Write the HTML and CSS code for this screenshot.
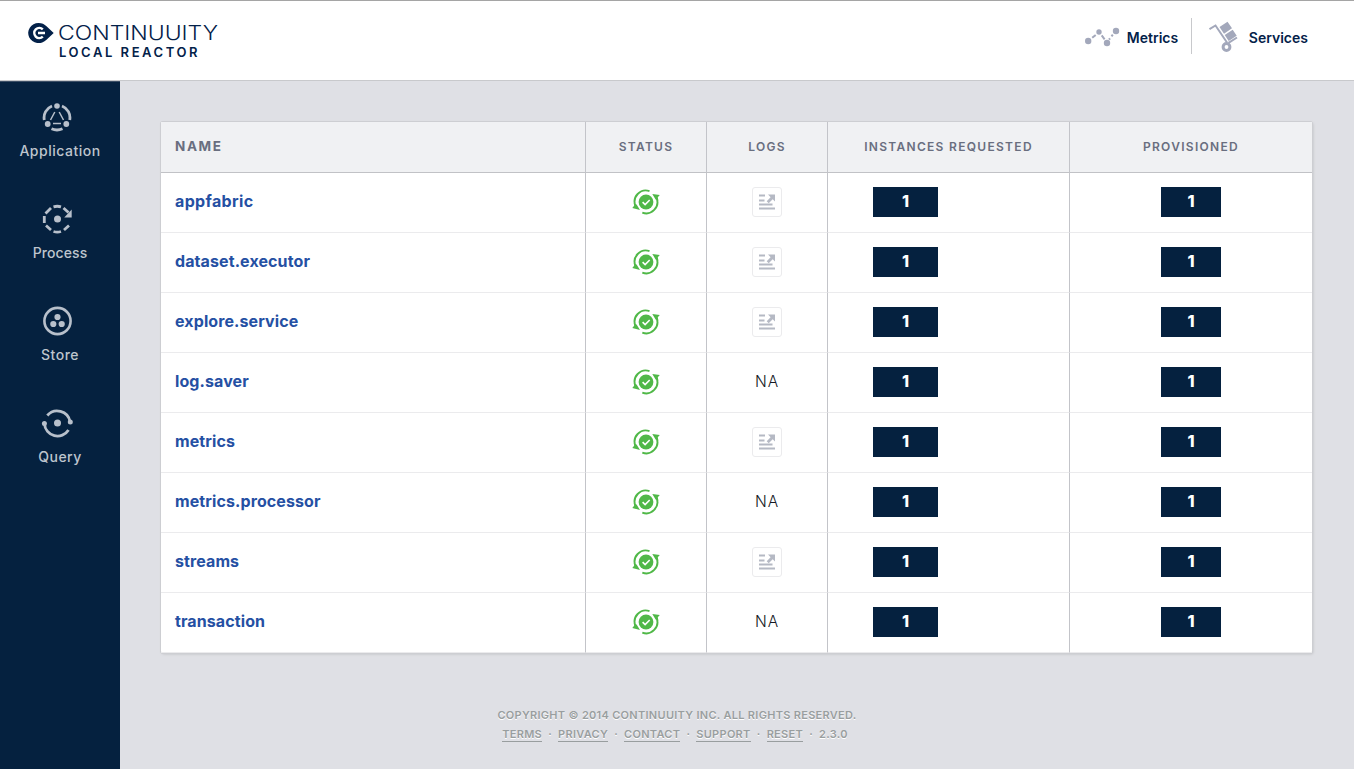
FILE: index.html
```html
<!DOCTYPE html>
<html lang="en">
<head>
<meta charset="utf-8">
<title>Continuuity Local Reactor</title>
<link rel="stylesheet" href="styles.css">
</head>
<body>
<svg class="defs" width="0" height="0">
  <symbol id="status" viewBox="0 0 28 26">
    <circle cx="14" cy="13" r="7.4" fill="#50b848"/>
    <path d="M10.600 13.200l2.500 2.400 4.600-4.600" fill="none" stroke="#fff" stroke-width="1.600"/>
    <path d="M17.500 2.100A11.200 11.200 0 0 0 3.500 17M10.300 23.600A11.200 11.200 0 0 0 24.600 9" fill="none" stroke="#50b848" stroke-width="1.900"/>
    <path d="M20.300 4.900l7.500 1.100-2 2.200.6 3.300-2.800-1zM.3 18.900l2-2.300L1.800 14.500l2.800.9 3.400 5.700z" fill="#50b848"/>
  </symbol>
  <symbol id="log" viewBox="0 0 16 16">
    <path d="M0 1.500h6M0 6.500h5.500M0 10.500h13.500M0 14.500h16" fill="none" stroke="#b5b9c4" stroke-width="2"/>
    <path d="M9 .5h7v7l-2.300-2.300-4 4-2-2 3.900-4z" fill="#b5b9c4"/>
  </symbol>
</svg>
<header class="header">
  <div class="brand">
    <svg class="mark" width="26" height="20" viewBox="0 0 26 20"><path d="M10.5 0C13.8 0 16.5 1.2 18.5 3.3L25.7 10l-7.2 6.7A10.5 10 0 1 1 10.5 0z" fill="#032149"/><path d="M14.800 6.400A5 5 0 1 0 14.800 13.600M10 10h7" fill="none" stroke="#fff" stroke-width="2.500"/></svg>
    <div class="brand-text">
      <svg class="wordmark" width="166" height="22" viewBox="0 0 166 22"><text x="0" y="17" textLength="160" lengthAdjust="spacingAndGlyphs">CONTINUUITY</text></svg>
      <div class="edition">LOCAL REACTOR</div>
    </div>
  </div>
  <nav class="top-nav">
    <a class="top-link metrics"><svg width="36" height="20" viewBox="0 0 36 20"><path d="M7.200 10.800l3.500-2.900M16.700 8.300l2.900 4M24 12.700l1-1.400M26.500 9.300l1.300-1.700" fill="none" stroke="#a3a8bb" stroke-width="2"/><g fill="#a3a8bb"><circle cx="3.2" cy="14" r="3.2"/><circle cx="14" cy="5" r="2.7"/><circle cx="22" cy="16" r="3.2"/><circle cx="31" cy="4" r="3.2"/></g></svg><span>Metrics</span></a>
    <a class="top-link services"><svg width="30" height="32" viewBox="0 0 30 32"><g fill="#a3a8bb"><path d="M10.500 6l8-5.300 4.500 6.500-8 5.500zM15.700 14l8-5.300 4 6-8 5.300z"/></g><path d="M.5 8.200l6-3.700L18 21.500M19.500 21.800l8.500-5.300" fill="none" stroke="#a3a8bb" stroke-width="2"/><circle cx="17.500" cy="26" r="3.400" fill="#fff" stroke="#a3a8bb" stroke-width="3"/></svg><span>Services</span></a>
  </nav>
</header>
<div class="body">
  <aside class="sidebar">
    <a class="side-link"><svg width="32" height="30" viewBox="0 0 32 30"><g fill="none" stroke="#b8c0cb" stroke-width="2.8"><path d="M3.300 18A13 12.600 0 0 1 11 4M21 4A13 12.600 0 0 1 28.700 18M10.500 26.800A14 14 0 0 0 21.500 26.800"/><path d="M13.800 10L9.500 18M18.200 10l4.300 8M12 21.500h8" stroke-width="1.500"/></g><g fill="#b8c0cb"><circle cx="16" cy="4" r="2.800"/><circle cx="6.700" cy="22" r="2.900"/><circle cx="25.300" cy="22" r="2.900"/></g></svg><span>Application</span></a>
    <a class="side-link"><svg width="32" height="30" viewBox="0 0 32 30"><path d="M12.500 2.800A13 13 0 0 1 20 2.800M22.500 4l5 4.500M4.500 9.500L10 4M3.300 12v7M5 21.500L10 26M12.500 27.500A13 13 0 0 0 20 27.500M23 26l5-4.500" fill="none" stroke="#b8c0cb" stroke-width="2.800"/><path d="M30.700 5.500v8h-7.500z" fill="#b8c0cb"/><circle cx="16.500" cy="15" r="3.500" fill="#b8c0cb"/></svg><span class="tight">Process</span></a>
    <a class="side-link"><svg width="32" height="30" viewBox="0 0 32 30"><circle cx="16.500" cy="15" r="13.100" fill="none" stroke="#b8c0cb" stroke-width="2.600"/><g fill="#b8c0cb"><circle cx="16.500" cy="11" r="3.100"/><circle cx="12.300" cy="18" r="3.100"/><circle cx="20.700" cy="18" r="3.100"/></g></svg><span>Store</span></a>
    <a class="side-link"><svg width="32" height="30" viewBox="0 0 32 30"><path d="M6.300 7.500A13 13 0 0 1 29 13.500M3.500 16A13 13 0 0 0 27.500 22" fill="none" stroke="#b8c0cb" stroke-width="2.800"/><g fill="#b8c0cb"><circle cx="16.500" cy="15" r="3.500"/><circle cx="29.300" cy="14" r="2.500"/><circle cx="3.400" cy="15.500" r="2.500"/></g></svg><span>Query</span></a>
  </aside>
  <main class="main">
    <div class="table">
      <div class="row head"><div class="cell h-name">NAME</div><div class="cell">STATUS</div><div class="cell">LOGS</div><div class="cell">INSTANCES REQUESTED</div><div class="cell">PROVISIONED</div></div>
      <div class="row"><div class="cell name wider">appfabric</div><div class="cell"><svg class="status"><use href="#status"/></svg></div><div class="cell"><a class="log"><svg width="16" height="16"><use href="#log"/></svg></a></div><div class="cell req"><b class="pill wide">1</b></div><div class="cell"><b class="pill">1</b></div></div>
      <div class="row"><div class="cell name">dataset.executor</div><div class="cell"><svg class="status"><use href="#status"/></svg></div><div class="cell"><a class="log"><svg width="16" height="16"><use href="#log"/></svg></a></div><div class="cell req"><b class="pill wide">1</b></div><div class="cell"><b class="pill">1</b></div></div>
      <div class="row"><div class="cell name">explore.service</div><div class="cell"><svg class="status"><use href="#status"/></svg></div><div class="cell"><a class="log"><svg width="16" height="16"><use href="#log"/></svg></a></div><div class="cell req"><b class="pill wide">1</b></div><div class="cell"><b class="pill">1</b></div></div>
      <div class="row"><div class="cell name">log.saver</div><div class="cell"><svg class="status"><use href="#status"/></svg></div><div class="cell na">NA</div><div class="cell req"><b class="pill wide">1</b></div><div class="cell"><b class="pill">1</b></div></div>
      <div class="row"><div class="cell name">metrics</div><div class="cell"><svg class="status"><use href="#status"/></svg></div><div class="cell"><a class="log"><svg width="16" height="16"><use href="#log"/></svg></a></div><div class="cell req"><b class="pill wide">1</b></div><div class="cell"><b class="pill">1</b></div></div>
      <div class="row"><div class="cell name">metrics.processor</div><div class="cell"><svg class="status"><use href="#status"/></svg></div><div class="cell na">NA</div><div class="cell req"><b class="pill wide">1</b></div><div class="cell"><b class="pill">1</b></div></div>
      <div class="row"><div class="cell name">streams</div><div class="cell"><svg class="status"><use href="#status"/></svg></div><div class="cell"><a class="log"><svg width="16" height="16"><use href="#log"/></svg></a></div><div class="cell req"><b class="pill wide">1</b></div><div class="cell"><b class="pill">1</b></div></div>
      <div class="row"><div class="cell name">transaction</div><div class="cell"><svg class="status"><use href="#status"/></svg></div><div class="cell na">NA</div><div class="cell req"><b class="pill wide">1</b></div><div class="cell"><b class="pill">1</b></div></div>
    </div>
    <footer class="footer">
      <div class="copy">COPYRIGHT © 2014 CONTINUUITY INC. ALL RIGHTS RESERVED.</div>
      <div class="links"><a>TERMS</a><i>·</i><a>PRIVACY</a><i>·</i><a>CONTACT</a><i>·</i><a>SUPPORT</a><i>·</i><a>RESET</a><i>·</i><span>2.3.0</span></div>
    </footer>
  </main>
</div>
</body>
</html>
```
FILE: styles.css
```css
* { box-sizing: border-box; }
body { margin: 0; height: 769px; overflow: hidden; background: #dfe0e5; font-family: Inter, "Liberation Sans", sans-serif; display: flex; flex-direction: column; }
svg { display: block; flex: none; }
.defs { position: absolute; }
.header { height: 81px; flex: none; background: #fff; border-top: 1px solid #a5a5a5; border-bottom: 1px solid #c8c9cc; display: flex; justify-content: space-between; color: #032149; }
.brand { display: flex; padding: 22px 0 0 28px; }
.brand-text { padding-left: 4px; }
.wordmark { overflow: visible; }
.wordmark text { font-size: 20px; font-weight: 300; fill: #032149; }
.edition { margin: -1px 0 0 1px; font-size: 13px; line-height: 16px; font-weight: 600; letter-spacing: 2.55px; white-space: nowrap; }
.top-nav { display: flex; padding: 17px 46px 0 0; }
.top-link { display: flex; align-items: center; height: 36px; font-size: 14px; font-weight: 600; }
.top-link span { padding-top: 2px; }
.metrics { width: 107px; border-right: 1px solid #c8c9cc; }
.metrics svg { margin: 2px 6px 0 0; }
.services { padding-left: 17px; }
.services svg { margin: 2px 10px 0 0; }
.body { display: flex; flex: 1; }
.sidebar { width: 120px; background: #05213f; border-top: 1px solid #3c4e65; padding-top: 20px; }
.side-link { display: flex; flex-direction: column; align-items: center; height: 102px; color: #bec5cd; font-size: 14px; line-height: 20px; font-weight: 500; letter-spacing: .5px; }
.side-link svg { margin: 0 6px 9px 0; }
.side-link .tight { letter-spacing: .1px; }
.main { flex: 1; padding: 41px 42px 0 41px; }
.table { width: 1151px; background: #fff; border-radius: 2px; box-shadow: 0 0 0 1px #cdced2, 1px 1px 3px #b9babe; }
.row { display: grid; grid-template-columns: 425px 121px 121px 242px 242px; height: 60px; }
.row.head { height: 51px; background: #f0f1f3; color: #696e7f; font-size: 12px; font-weight: 600; letter-spacing: 1.3px; }
.cell { display: flex; align-items: center; justify-content: center; border-right: 1px solid #c3c4c9; border-bottom: 1px solid #ebebed; padding-bottom: 2px; }
.cell:last-child { border-right: 0; }
.head .cell { border-bottom-color: #c1c2c6; padding-bottom: 1px; }
.head .h-name { justify-content: flex-start; padding-left: 14px; font-size: 13.5px; font-weight: 700; letter-spacing: 1.6px; padding-bottom: 2px; }
.name { justify-content: flex-start; padding: 0 0 3px 14px; color: #2550a3; font-size: 16px; font-weight: 700; letter-spacing: .1px; }
.name.wider { letter-spacing: .35px; }
.status { width: 28px; height: 26px; }
.log { display: flex; align-items: center; justify-content: center; width: 30px; height: 30px; border: 1px solid #ebebed; border-radius: 3px; }
.na { font-size: 15.5px; font-weight: 300; letter-spacing: 1px; color: #151a24; }
.req { justify-content: flex-start; padding-left: 45px; }
.pill { width: 60px; height: 30px; line-height: 28px; background: #05213f; color: #fff; font-size: 16px; font-weight: 800; text-align: center; }
.pill.wide { width: 65px; }
.footer { display: flex; flex-direction: column; align-items: center; width: 1032px; padding-top: 53px; color: #999e9f; font-size: 11px; line-height: 19px; font-weight: 600; letter-spacing: .29px; text-shadow: 0 1px 0 #fff; }
.links { display: flex; padding-right: 4px; }
.links a { line-height: 14px; height: 15px; margin-top: 2px; border-bottom: 1px solid #999e9f; }
.links i { font-style: normal; width: 16px; text-align: center; }
```
